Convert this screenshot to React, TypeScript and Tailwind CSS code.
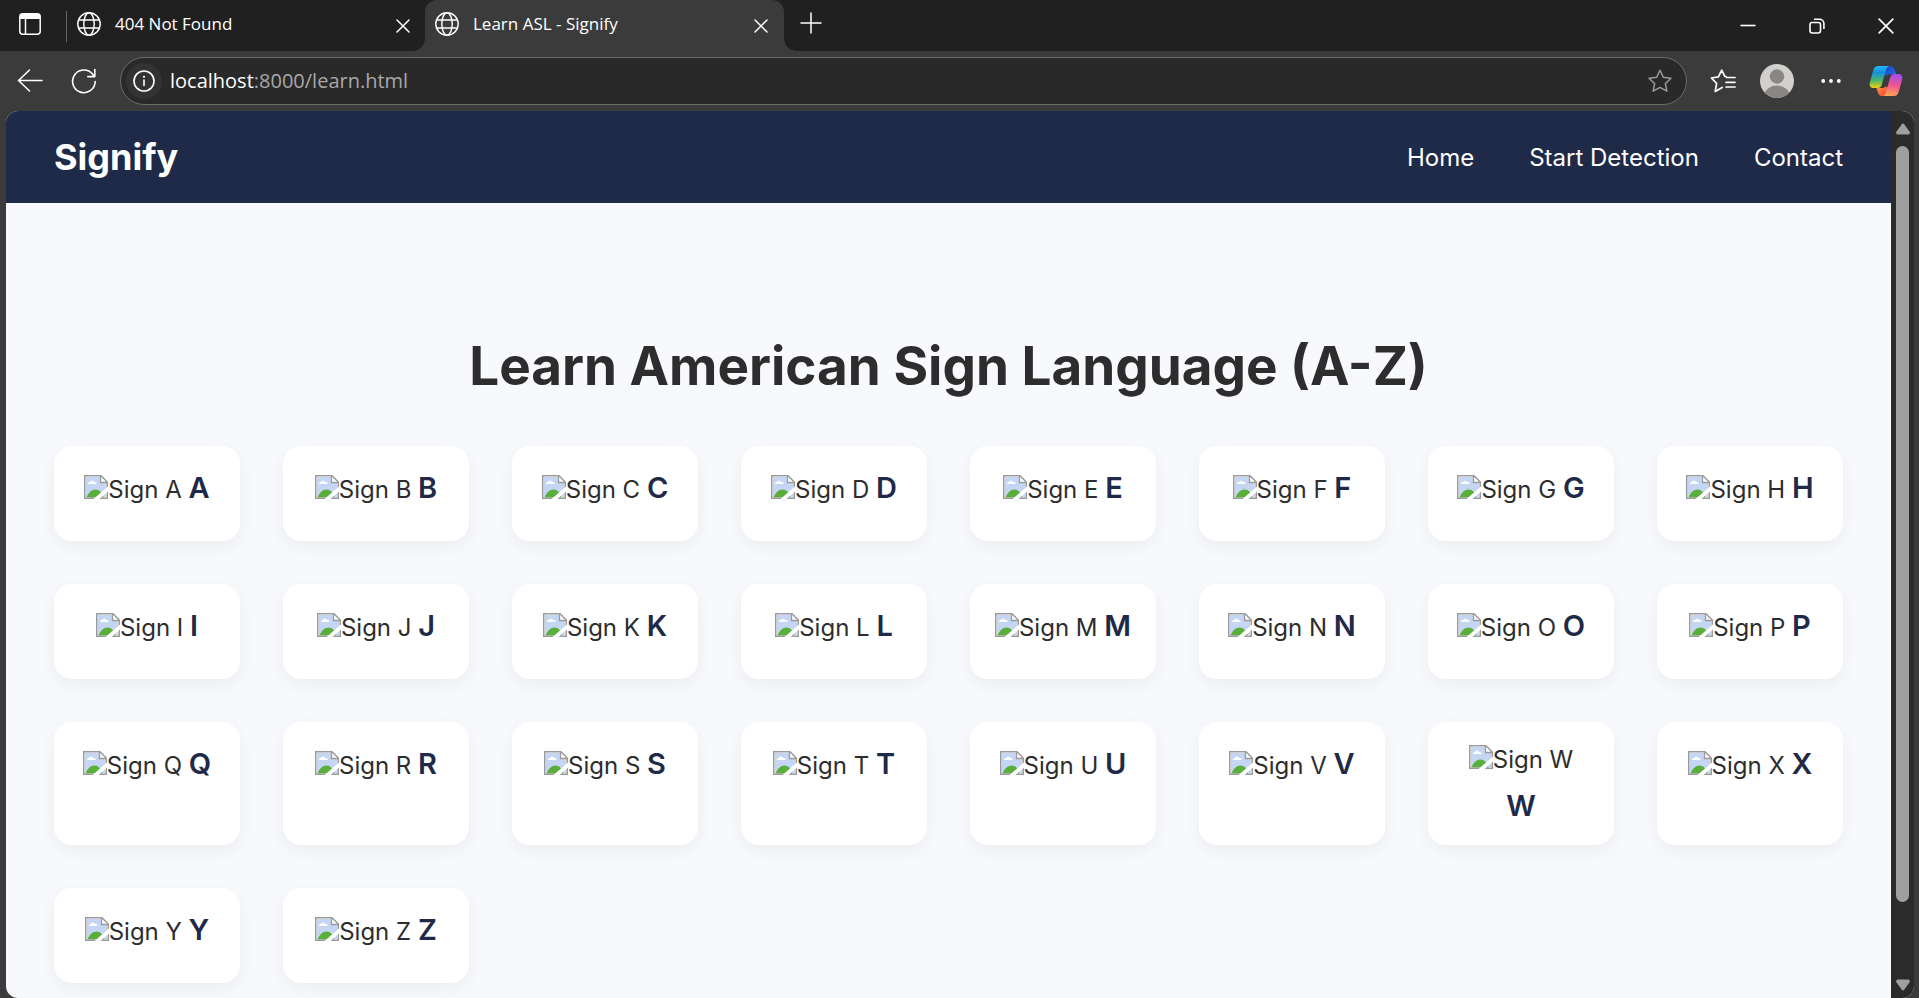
import React from "react";

const letters = "ABCDEFGHIJKLMNOPQRSTUVWXYZ".split("");

function Globe() {
  return (
    <svg className="size-6 shrink-0" viewBox="0 0 24 24" fill="none" stroke="white" strokeWidth="1.4" aria-hidden="true">
      <circle cx="12" cy="12" r="11.2" />
      <ellipse cx="12" cy="12" rx="5.2" ry="11.2" />
      <path d="M1.6 8h20.8M1.6 16h20.8" />
    </svg>
  );
}

function Cross({ size }: { size: string }) {
  return (
    <svg className={size} viewBox="0 0 14 14" fill="none" stroke="white" strokeWidth="1.5" strokeLinecap="round" aria-hidden="true">
      <path d="M1 1l12 12M13 1L1 13" />
    </svg>
  );
}

function BrokenImage() {
  return (
    <svg className="inline-block size-6 align-[-1px]" viewBox="0 0 24 24" aria-hidden="true">
      <path d="M.75.75H17L23.25 7v16.25H.75z" fill="#fff" />
      <path d="M2 2h14v6h6v14H2z" fill="#c5d6f5" />
      <path d="M4 9c0-1.600 1.200-2 2-2 .6-1.600 3.400-2 4.200 0 1.800-.2 2.400.8 2.400 2z" fill="#fff" />
      <path d="M2.500 22.500c2-5 5-8 9-8s6.500 3 8 8z" fill="#5aae3a" />
      <path d="M16.500 1v6.500H23" fill="#fff" stroke="#9a9a9a" strokeWidth="1.300" />
      <path d="M.75.75H17L23.250 7v16.250H.75z" fill="none" stroke="#9a9a9a" strokeWidth="1.500" />
      <path d="M24 11.500V16.500L15.500 24H9.500z" fill="#fff" />
    </svg>
  );
}

function Copilot() {
  return (
    <svg className="h-8 w-[34px]" viewBox="0 0 34 32" aria-hidden="true">
      <defs>
        <linearGradient id="cpLeft" x1="0" y1="0" x2="0" y2="1">
          <stop offset="0" stopColor="#25b5f5" />
          <stop offset=".3" stopColor="#1590e0" />
          <stop offset=".65" stopColor="#4bb56a" />
          <stop offset="1" stopColor="#f5cf10" />
        </linearGradient>
        <linearGradient id="cpRight" x1=".6" y1="0" x2=".4" y2="1">
          <stop offset="0" stopColor="#a34cf0" />
          <stop offset=".5" stopColor="#ef5590" />
          <stop offset="1" stopColor="#ffa552" />
        </linearGradient>
        <linearGradient id="cpTop" x1="0" y1="0" x2="1" y2="1">
          <stop offset="0" stopColor="#1240b8" />
          <stop offset="1" stopColor="#2d6df0" />
        </linearGradient>
        <linearGradient id="cpBottom" x1="0" y1="0" x2="1" y2="1">
          <stop offset="0" stopColor="#ff9440" />
          <stop offset="1" stopColor="#ee3f3a" />
        </linearGradient>
      </defs>
      <path d="M17 1h4.500c2.500 0 3.500 2 4.300 4.500L27 9h-5c-2 0-3 .5-4 1.500L15 9z" fill="url(#cpTop)" />
      <path d="M17 31h-4.500c-2 0-3-1.500-3.800-4L7.500 23h5c2 0 3-.5 4-1.500l3 1.500z" fill="url(#cpBottom)" />
      <path d="M9 1h12c-2 0-3.200 1.500-3.800 3.500L12.800 19.500C12 22 11 23 8.500 23H4.500C1 23 0 20.500 1 17L4.200 5.500C5 2.500 6.500 1 9 1z" fill="url(#cpLeft)" />
      <path d="M25 31H13c2 0 3.200-1.500 3.800-3.500L21.200 12.500C22 10 23 9 25.500 9h4c3.500 0 4.500 2.500 3.500 6l-3.200 11.500C29 29.500 27.500 31 25 31z" fill="url(#cpRight)" />
    </svg>
  );
}

function Tab({ title, active }: { title: string; active?: boolean }) {
  return (
    <div className={active ? "relative flex w-[359px] items-center rounded-t-xl bg-[#3b3b3b] pr-4 pl-[10px]" : "flex w-[348px] items-center pr-[15px]"}>
      {active && (
        <>
          <span className="absolute bottom-0 -left-3 size-3 bg-[radial-gradient(circle_at_0_0,#202020_11.500px,#3b3b3b_12px)]" />
          <span className="absolute -right-3 bottom-0 size-3 bg-[radial-gradient(circle_at_100%_0,#202020_11.500px,#3b3b3b_12px)]" />
        </>
      )}
      <button className="flex h-full flex-1 items-center gap-[14px] pb-[3px] text-left text-[17px] text-white">
        <Globe />
        {title}
      </button>
      <button aria-label={`Close ${title}`}>
        <Cross size="size-[14px]" />
      </button>
    </div>
  );
}

function TabStrip() {
  return (
    <div className="flex h-[51px] shrink-0 bg-[#202020]">
      <button aria-label="Tab actions" className="flex w-[66px] items-center pb-[3px] pl-[19px]">
        <svg className="size-[22px]" viewBox="0 0 22 22" fill="none" stroke="white" strokeWidth="1.500" aria-hidden="true">
          <rect x=".8" y=".8" width="20.400" height="20.400" rx="3" />
          <path d="M1 3.500C1 2 2 1 3.500 1h15C20 1 21 2 21 3.500V6H1z" fill="white" stroke="none" />
          <path d="M6.500 6v15" />
        </svg>
      </button>
      <div className="mt-[11px] mr-[10px] h-[31px] w-px bg-[#666]" />
      <Tab title="404 Not Found" />
      <Tab title="Learn ASL - Signify" active />
      <button aria-label="New tab" className="ml-4 pb-[5px]">
        <svg className="size-[22px]" viewBox="0 0 22 22" stroke="white" strokeWidth="1.500" aria-hidden="true">
          <path d="M11 .5v21M.5 11h21" />
        </svg>
      </button>
      <div className="ml-auto flex items-center gap-[53px] pr-[25px]">
        <button aria-label="Minimize">
          <svg className="size-4" viewBox="0 0 16 16" stroke="white" strokeWidth="1.600" aria-hidden="true">
            <path d="M.5 7.500h15" />
          </svg>
        </button>
        <button aria-label="Restore">
          <svg className="size-4" viewBox="0 0 16 16" fill="none" stroke="white" strokeWidth="1.600" aria-hidden="true">
            <rect x="1" y="4.500" width="10.500" height="10.500" rx="2.200" />
            <path d="M5 1.200h5.500c2.500 0 4.400 1.900 4.400 4.400V11" />
          </svg>
        </button>
        <button aria-label="Close window">
          <Cross size="size-4" />
        </button>
      </div>
    </div>
  );
}

const starPath = "M12 1.200l3.300 7 7.700 1-5.600 5.300 1.400 7.600L12 18.400l-6.800 3.700 1.400-7.600L1 9.200l7.700-1z";

function Toolbar() {
  return (
    <div className="flex h-[60px] shrink-0 items-center bg-[#3b3b3b] pr-4 pl-[17px]">
      <button aria-label="Back">
        <svg className="size-[26px]" viewBox="0 0 26 26" fill="none" stroke="white" strokeWidth="1.600" strokeLinecap="round" strokeLinejoin="round" aria-hidden="true">
          <path d="M25 12.500H1.500M12.500 2L1.500 12.500l11 10.500" />
        </svg>
      </button>
      <button aria-label="Refresh" className="ml-[28px]">
        <svg className="size-[26px]" viewBox="0 0 26 26" fill="none" stroke="white" strokeWidth="1.600" strokeLinecap="round" strokeLinejoin="round" aria-hidden="true">
          <path d="M24.200 13.500A11.300 11.300 0 1 1 21.500 6l2.200 2.600M23.800 1.500v7.100h-7" />
        </svg>
      </button>
      <div className="ml-[23px] flex h-12 flex-1 items-center rounded-full border border-[#6a6a6a] bg-[#292929] pr-[14px] pl-[5px]">
        <button aria-label="Site information" className="flex size-9 items-center justify-center rounded-full bg-[#333]">
          <svg className="size-[22px]" viewBox="0 0 22 22" fill="none" stroke="white" strokeWidth="1.600" aria-hidden="true">
            <circle cx="11" cy="11" r="10" />
            <path d="M11 9.500v6.500" />
            <circle cx="11" cy="6.800" r="1.100" fill="white" stroke="none" />
          </svg>
        </button>
        <p className="ml-2 flex-1 text-[20px] text-[#a8a8a8]">
          <span className="text-white">localhost</span>:8000/learn.html
        </p>
        <button aria-label="Add to favorites">
          <svg className="size-6" viewBox="0 0 24 24" fill="none" stroke="#9a9a9a" strokeWidth="1.500" strokeLinejoin="round" aria-hidden="true">
            <path d={starPath} />
          </svg>
        </button>
      </div>
      <button aria-label="Favorites" className="ml-[23px]">
        <svg className="h-6 w-[26px]" viewBox="0 0 26 24" fill="none" stroke="white" strokeWidth="1.700" strokeLinejoin="round" strokeLinecap="round" aria-hidden="true">
          <path d="M16 7.500l-1.200-.2-3.100-6.100-3.300 6.600-7 1.200 5.200 5.300L5.200 22.500l7-4M16.500 8.500h8.500M16 13.300h9M16 18h9" />
        </svg>
      </button>
      <button aria-label="Profile" className="ml-6">
        <svg className="size-[34px]" viewBox="0 0 34 34" aria-hidden="true">
          <clipPath id="avatar"><circle cx="17" cy="17" r="17" /></clipPath>
          <g clipPath="url(#avatar)">
            <rect width="34" height="34" fill="#d2d0ce" />
            <circle cx="17" cy="12.500" r="7.200" fill="#8a8683" />
            <ellipse cx="17" cy="33" rx="13" ry="11.500" fill="#8a8683" />
          </g>
        </svg>
      </button>
      <button aria-label="Settings and more" className="ml-[27px]">
        <svg className="h-5 w-5" viewBox="0 0 20 20" fill="white" aria-hidden="true">
          <circle cx="2.200" cy="10" r="1.900" />
          <circle cx="10" cy="10" r="1.900" />
          <circle cx="17.800" cy="10" r="1.900" />
        </svg>
      </button>
      <button aria-label="Copilot" className="ml-[28px]">
        <Copilot />
      </button>
    </div>
  );
}

function SiteHeader() {
  return (
    <header className="flex h-[92px] shrink-0 items-center justify-between bg-[#1f2a48] px-12 text-white">
      <a href="#top" className="text-[36px] font-bold">Signify</a>
      <nav className="flex gap-[55px] pt-0.5 text-[24px]">
        <a href="#home">Home</a>
        <a href="#detect">Start Detection</a>
        <a href="#contact">Contact</a>
      </nav>
    </header>
  );
}

function SignCard({ letter }: { letter: string }) {
  return (
    <li className="min-h-[95px] rounded-[18px] bg-white px-6 pt-[19px] pb-4 text-center text-[24px] leading-[38px] text-[#2d2d2d] shadow-[0_6px_18px_rgba(0,0,0,0.05)]">
      <span className="inline-block pb-1 whitespace-nowrap">
        <BrokenImage />
        Sign {letter}
      </span>{" "}
      <strong className="text-[29px] leading-[46px] font-semibold text-[#1f2a48]">{letter}</strong>
    </li>
  );
}

function Scrollbar() {
  return (
    <div className="flex w-[23px] shrink-0 flex-col items-center bg-[#2b2b2b] pt-3 pb-[7px]" aria-hidden="true">
      <svg className="h-3 w-[14px]" viewBox="0 0 14 12"><path d="M5.800 1.200Q7 0 8.200 1.200L13.800 9Q14.200 11 12.500 11.500H1.500Q-.2 11 .2 9z" fill="#9f9f9f" /></svg>
      <div className="mt-[11px] w-[13px] flex-1 rounded-full bg-[#9f9f9f]" />
      <svg className="mt-[77px] h-3 w-[14px]" viewBox="0 0 14 12"><path d="M5.800 10.800Q7 12 8.200 10.800L13.800 3Q14.200 1 12.500.5H1.500Q-.2 1 .2 3z" fill="#9f9f9f" /></svg>
    </div>
  );
}

export default function App() {
  return (
    <div className="flex h-screen flex-col overflow-hidden bg-[#3b3b3b] font-['Open_Sans',sans-serif]">
      <TabStrip />
      <Toolbar />
      <div className="mr-[5px] ml-[6px] flex min-h-0 flex-1 overflow-hidden rounded-xl bg-[#f8f9fd] font-['Inter',sans-serif]">
        <div className="flex min-w-0 flex-1 flex-col overflow-hidden">
          <SiteHeader />
          <main className="px-12 pt-[120px]">
            <h1 className="text-center text-[53px] leading-[86px] font-bold text-[#2d2d2d]">Learn American Sign Language (A-Z)</h1>
            <ul className="mt-[37px] grid grid-cols-[repeat(auto-fill,minmax(180px,1fr))] gap-[43px]">
              {letters.map((letter) => (
                <SignCard key={letter} letter={letter} />
              ))}
            </ul>
          </main>
        </div>
        <Scrollbar />
      </div>
    </div>
  );
}
